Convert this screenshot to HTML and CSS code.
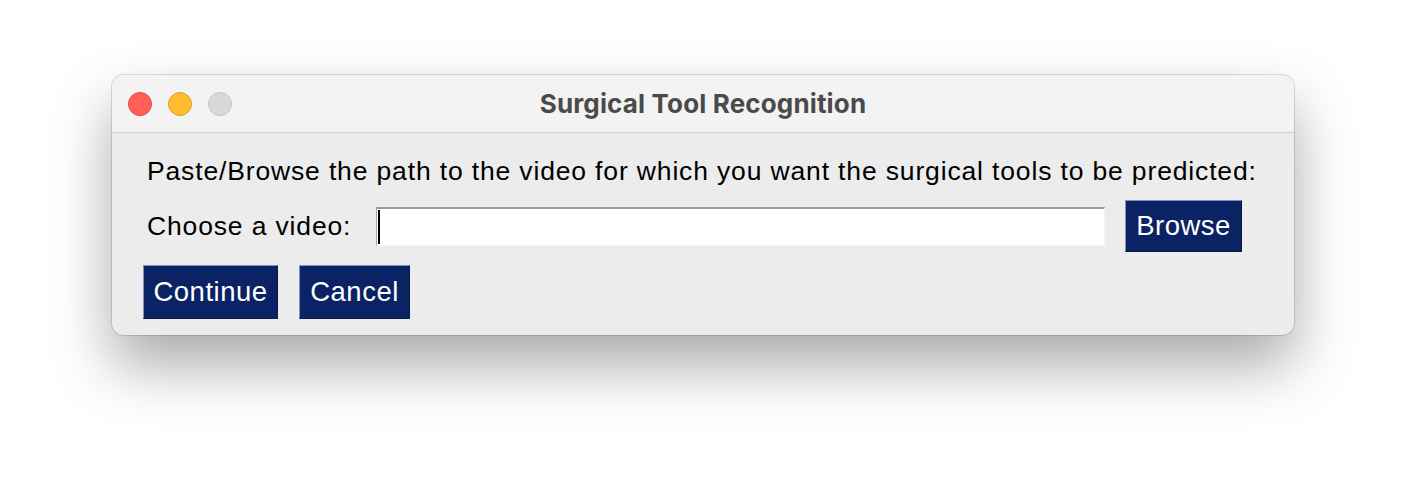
FILE: index.html
```html
<!DOCTYPE html>
<html>
<head>
<meta charset="utf-8">
<link rel="stylesheet" href="styles.css">
</head>
<body>
<div class="window">
  <div class="titlebar">
    <div class="lights">
      <span class="light red"></span>
      <span class="light yellow"></span>
      <span class="light gray"></span>
    </div>
    <div class="title">Surgical Tool Recognition</div>
    <div></div>
  </div>
  <div class="content">
    <div class="prompt">Paste/Browse the path to the video for which you want the surgical tools to be predicted:</div>
    <div class="row">
      <span class="label">Choose a video:</span>
      <div class="input"><span class="caret"></span></div>
      <button class="btn browse">Browse</button>
    </div>
    <div class="actions">
      <button class="btn continue">Continue</button>
      <button class="btn cancel">Cancel</button>
    </div>
  </div>
</div>
</body>
</html>
```
FILE: styles.css
```css
html, body {
  margin: 0;
  background: #ffffff;
}
body {
  box-sizing: border-box;
  min-height: 484px;
  padding: 75px 0 0 112px;
  font-family: "Liberation Sans", Arial, sans-serif;
}
.window {
  width: 1182px;
  height: 260px;
  border-radius: 12px;
  background: #ececec;
  box-shadow: 0 30px 60px rgba(0, 0, 0, 0.34), 0 0 0 1px rgba(0, 0, 0, 0.13);
  overflow: hidden;
}
.titlebar {
  height: 57px;
  background: #f3f3f3;
  border-bottom: 1px solid #d0d0d0;
  display: grid;
  grid-template-columns: 1fr auto 1fr;
  align-items: center;
}
.lights {
  display: flex;
  gap: 16px;
  padding-left: 16px;
}
.light {
  width: 22px;
  height: 22px;
  border-radius: 50%;
  border: 1px solid;
}
.red { background: #ff5f57; border-color: #e2463f; }
.yellow { background: #febc2e; border-color: #dea024; }
.gray { background: #d8d8d8; border-color: #c6c6c6; }
.title {
  font-family: Inter, "Noto Sans", sans-serif;
  font-weight: 700;
  font-size: 26px;
  letter-spacing: 0.15px;
  color: #4a4a4a;
}
.content {
  display: flex;
  flex-direction: column;
  padding: 24px 0 0 31px;
}
.prompt {
  margin-left: 4px;
  font-size: 26.5px;
  letter-spacing: 0.85px;
  line-height: 28px;
  color: #000;
}
.row {
  display: flex;
  align-items: center;
  margin-top: 15px;
  margin-left: 4px;
}
.label {
  font-size: 26.5px;
  letter-spacing: 0.85px;
  color: #000;
  width: 229px;
}
.input {
  width: 726px;
  height: 36px;
  background: #fff;
  border-top: 2px solid #9b9b9b;
  border-left: 1px solid #a8a8a8;
  border-bottom: 1px solid #f4f4f4;
  border-right: 1px solid #f4f4f4;
  display: flex;
  align-items: stretch;
  padding: 0 0 0 1px;
}
.caret {
  width: 2px;
  background: #000;
  margin: 1px 0;
}
.btn {
  font-family: "Liberation Sans", Arial, sans-serif;
  font-size: 27.5px;
  letter-spacing: 0.5px;
  color: #fff;
  background: #0b2364;
  border: 1px solid;
  border-color: #8494bb #0a1a45 #0a1a45 #8494bb;
  padding: 0;
  margin: 0;
  display: flex;
  align-items: center;
  justify-content: center;
}
.browse {
  margin-left: 20px;
  width: 117px;
  height: 52px;
}
.actions {
  display: flex;
  gap: 21px;
  margin-top: 13px;
}
.continue {
  width: 135px;
  height: 54px;
}
.cancel {
  width: 111px;
  height: 54px;
}
```
